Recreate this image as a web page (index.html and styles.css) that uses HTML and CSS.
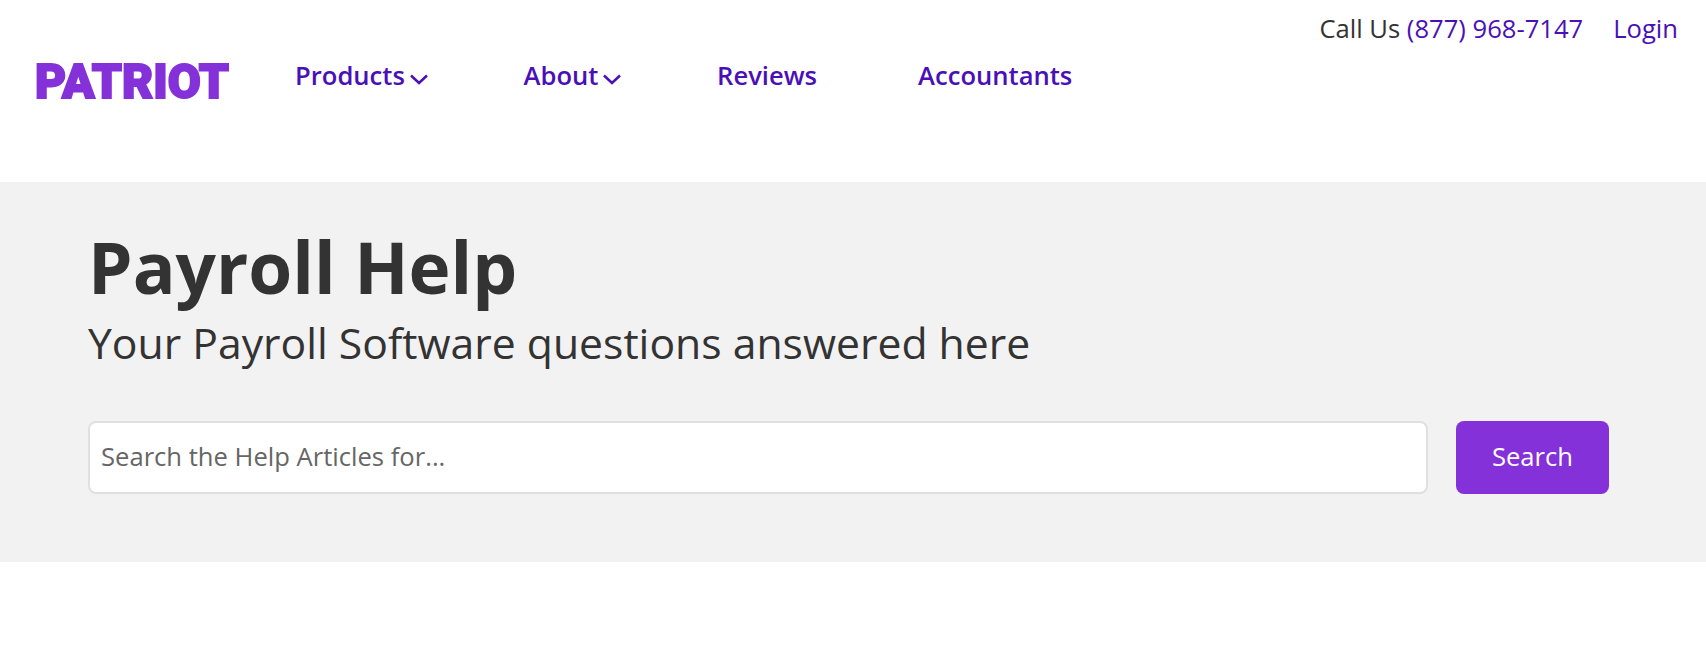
FILE: index.html
```html
<!DOCTYPE html>
<html lang="en">
<head>
<meta charset="utf-8">
<title>Payroll Help</title>
<link rel="stylesheet" href="styles.css">
</head>
<body>
<header class="site-header">
  <div class="top-links">
    <span class="call">Call Us <a href="#">(877) 968-7147</a></span>
    <a href="#" class="login">Login</a>
  </div>
  <nav class="main-nav">
    <a href="#" class="logo" aria-label="Patriot">
      <svg width="215" height="64" viewBox="0 0 215 64"><text x="0" y="50" textLength="194" lengthAdjust="spacingAndGlyphs" class="logo-text">PATRIOT</text></svg>
    </a>
    <ul class="nav-list">
      <li class="nav-products"><a href="#">Products <svg class="chev" width="18" height="11" viewBox="0 0 18 11"><path d="M1 1.5l8 7.5 8-7.5"/></svg></a></li>
      <li class="nav-about"><a href="#">About <svg class="chev" width="18" height="11" viewBox="0 0 18 11"><path d="M1 1.5l8 7.5 8-7.5"/></svg></a></li>
      <li class="nav-reviews"><a href="#">Reviews</a></li>
      <li><a href="#">Accountants</a></li>
    </ul>
  </nav>
</header>
<section class="hero">
  <h1>Payroll Help</h1>
  <p class="sub">Your Payroll Software questions answered here</p>
  <form class="search">
    <input type="text" placeholder="Search the Help Articles for...">
    <button type="button">Search</button>
  </form>
</section>
</body>
</html>
```
FILE: styles.css
```css
* { box-sizing: border-box; }
html, body { margin: 0; padding: 0; background: #fff; }
body { font-family: "Open Sans", sans-serif; color: #333; height: 646px; overflow: hidden; }
a { color: #4a10b8; text-decoration: none; }
.site-header { height: 182px; padding: 12px 28px 0 36px; }
.top-links { display: flex; justify-content: flex-end; gap: 30px; font-size: 25.6px; line-height: 34px; }
.main-nav { display: flex; align-items: flex-start; margin-top: 13px; }
.logo { display: block; flex: none; width: 196px; height: 40px; }
.logo svg { display: block; margin-top: -11px; margin-left: -1px; }
.logo-text { font-family: Roboto, sans-serif; font-weight: 900; font-size: 49px; fill: #8531d9; stroke: #8531d9; stroke-width: 2px; }
.nav-list { list-style: none; display: flex; margin: 0 0 0 63px; padding: 0; font-size: 25.6px; font-weight: 600; line-height: 34px; }
.nav-list .nav-products { margin-right: 96px; }
.nav-list .nav-about { margin-right: 96px; }
.nav-list .nav-reviews { margin-right: 101px; }
.chev { fill: none; stroke: #4a10b8; stroke-width: 2.5px; margin-left: -2px; vertical-align: 0; }
.hero { background: #f2f2f2; height: 380px; padding: 47px 88px 0; }
.hero h1 { margin: 0; font-size: 71.1px; line-height: 76px; font-weight: 700; color: #333; }
.hero .sub { margin: 0; padding-top: 8px; font-size: 42.7px; line-height: 60px; color: #333; }
.search { display: flex; margin-top: 48px; height: 73px; }
.search input { width: 1340px; height: 73px; border: 2px solid #e0e0e0; border-radius: 8px; background: #fff; padding: 0 11px 2px; font: 25.6px "Open Sans", sans-serif; color: #333; outline: none; }
.search input::placeholder { color: #666; opacity: 1; }
.search button { margin-left: 28px; width: 153px; height: 73px; border: 0; border-radius: 8px; background: #8531d9; color: #fff; padding: 0 0 2px; font: 25.6px "Open Sans", sans-serif; }
```
